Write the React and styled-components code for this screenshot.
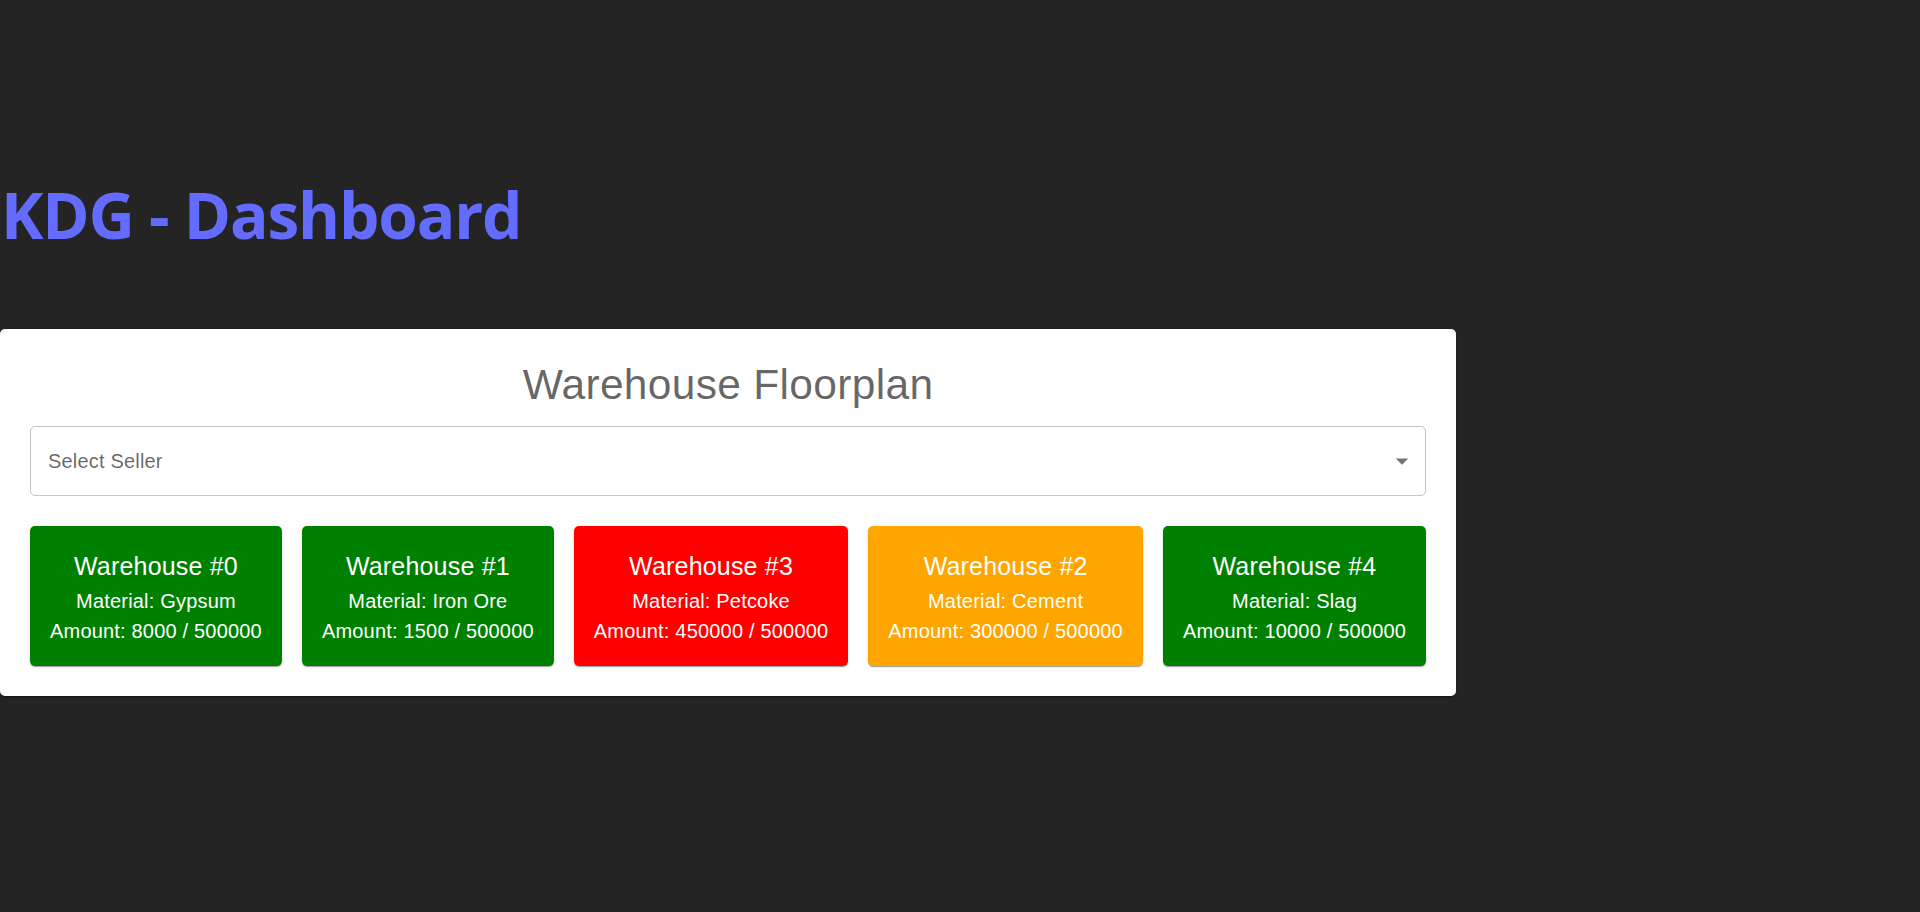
import React from "react";
import styled, { createGlobalStyle } from "styled-components";

const GlobalStyle = createGlobalStyle`
  html, body {
    margin: 0;
    padding: 0;
    background-color: #242424;
    min-height: 100%;
  }
  body {
    font-family: "Liberation Sans", Arial, sans-serif;
  }
`;

const Page = styled.div`
  min-height: 912px;
  padding-top: 180px;
  box-sizing: border-box;
`;

const Heading = styled.h1`
  margin: 0 0 79px;
  padding-left: 1px;
  font-family: "Open Sans", "Noto Sans", sans-serif;
  font-weight: 700;
  font-size: 64px;
  line-height: 1.1;
  letter-spacing: -1.2px;
  color: #646cff;
`;

const Panel = styled.section`
  width: 1456px;
  box-sizing: border-box;
  padding: 30px;
  background: #ffffff;
  border-radius: 5px;
  box-shadow: 0 2px 1px -1px rgba(0, 0, 0, 0.2), 0 1px 1px 0 rgba(0, 0, 0, 0.14),
    0 1px 3px 0 rgba(0, 0, 0, 0.12);
`;

const Title = styled.h2`
  margin: 0 0 14px;
  font-size: 42.5px;
  font-weight: 400;
  line-height: 1.235;
  letter-spacing: 0.00735em;
  text-align: center;
  color: rgba(0, 0, 0, 0.6);
`;

const SelectBox = styled.div`
  height: 70px;
  box-sizing: border-box;
  display: flex;
  align-items: center;
  justify-content: space-between;
  padding: 0 8px 0 17px;
  border: 1px solid #c4c4c4;
  border-radius: 5px;
  cursor: pointer;
`;

const SelectLabel = styled.span`
  font-size: 20px;
  line-height: 1.4375;
  letter-spacing: 0.00938em;
  color: rgba(0, 0, 0, 0.6);
`;

const ArrowIcon = styled.svg`
  width: 30px;
  height: 30px;
  fill: rgba(0, 0, 0, 0.54);
`;

const CardRow = styled.div`
  display: flex;
  gap: 20px;
  margin-top: 30px;
`;

const Card = styled.div`
  flex: 1 1 auto;
  padding: 20px;
  border-radius: 5px;
  text-align: center;
  color: #ffffff;
  background-color: ${(props) => props.$bg};
  box-shadow: 0 2px 1px -1px rgba(0, 0, 0, 0.2), 0 1px 1px 0 rgba(0, 0, 0, 0.14),
    0 1px 3px 0 rgba(0, 0, 0, 0.12);
`;

const CardTitle = styled.div`
  font-size: 25px;
  line-height: 1.6;
  letter-spacing: 0.0075em;
  white-space: nowrap;
`;

const CardLine = styled.div`
  font-size: 20px;
  line-height: 1.5;
  letter-spacing: 0.00938em;
  white-space: nowrap;
`;

const colors = {
  ok: "#008000",
  warn: "#ffa500",
  full: "#ff0000",
};

const warehouses = [
  { id: 0, material: "Gypsum", amount: 8000, status: "ok" },
  { id: 1, material: "Iron Ore", amount: 1500, status: "ok" },
  { id: 3, material: "Petcoke", amount: 450000, status: "full" },
  { id: 2, material: "Cement", amount: 300000, status: "warn" },
  { id: 4, material: "Slag", amount: 10000, status: "ok" },
];

const App = () => {
  return (
    <Page>
      <GlobalStyle />
      <Heading>KDG - Dashboard</Heading>
      <Panel>
        <Title>Warehouse Floorplan</Title>
        <SelectBox>
          <SelectLabel>Select Seller</SelectLabel>
          <ArrowIcon viewBox="0 0 24 24">
            <path d="M7 10l5 5 5-5z" />
          </ArrowIcon>
        </SelectBox>
        <CardRow>
          {warehouses.map((w) => (
            <Card key={w.id} $bg={colors[w.status]}>
              <CardTitle>Warehouse #{w.id}</CardTitle>
              <CardLine>Material: {w.material}</CardLine>
              <CardLine>
                Amount: {w.amount} / 500000
              </CardLine>
            </Card>
          ))}
        </CardRow>
      </Panel>
    </Page>
  );
};

export default App;
